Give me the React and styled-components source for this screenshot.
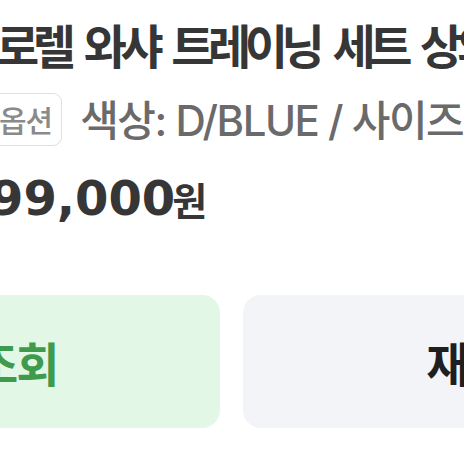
import React from "react";
import styled, { createGlobalStyle } from "styled-components";

const Global = createGlobalStyle`
  html, body { margin: 0; padding: 0; background: #ffffff; }
  body { font-family: "Noto Sans CJK KR", "Noto Sans", sans-serif; }
`;

const Page = styled.div`
  width: 464px;
  height: 464px;
  overflow: hidden;
  background: #ffffff;
  display: flex;
  flex-direction: column;
`;

const Title = styled.h1`
  margin: 16px 0 0 ${(p) => p.$shift}px;
  font-family: "Noto Sans CJK KR", sans-serif;
  font-size: 47px;
  font-weight: 700;
  letter-spacing: -6.5px;
  word-spacing: 10px;
  line-height: 56px;
  color: #363636;
  white-space: nowrap;
`;

const OptionRow = styled.div`
  display: flex;
  align-items: center;
  gap: 18px;
  height: 54px;
  margin: 20px 0 0 ${(p) => p.$shift}px;
  white-space: nowrap;
`;

const Badge = styled.span`
  display: inline-flex;
  align-items: center;
  height: 51px;
  padding: 0 9px 0 12px;
  border: 1.5px solid #e0e0e0;
  border-radius: 9px;
  font-size: 30px;
  font-weight: 500;
  letter-spacing: -1px;
  color: #8a8a8a;
`;

const OptionText = styled.span`
  font-family: "Inter", "Noto Sans CJK KR", sans-serif;
  font-size: 42px;
  font-weight: 500;
  letter-spacing: -1.5px;
  line-height: 54px;
  color: #6a6a6a;
  transform: translateY(2px);
`;

const Price = styled.div`
  margin: 22px 0 0 ${(p) => p.$shift}px;
  font-family: "DejaVu Sans", "Noto Sans CJK KR", sans-serif;
  font-size: 48px;
  font-weight: 700;
  line-height: 60px;
  color: #363636;
  white-space: nowrap;
`;

const Won = styled.span`
  margin-left: -3px;
  font-family: "Noto Sans CJK KR", sans-serif;
  font-size: 38px;
  font-weight: 700;
`;

const Actions = styled.div`
  display: flex;
  gap: 23px;
  margin: 66px 0 0 ${(p) => p.$shift}px;
`;

const ActionButton = styled.button`
  flex: 0 0 490px;
  height: 133px;
  border: none;
  border-radius: 18px;
  background: ${(p) => (p.$tone === "green" ? "#e2f7e5" : "#f2f4f7")};
  color: ${(p) => (p.$tone === "green" ? "#3e9b4d" : "#1f1f1f")};
  font-family: "Noto Sans CJK KR", sans-serif;
  font-size: 47px;
  font-weight: 700;
  letter-spacing: -2px;
  display: flex;
  align-items: center;
  justify-content: center;
  padding: 0;
`;

export default function App() {
  return (
    <>
      <Global />
      <Page>
        <Title $shift={-4}>로렐 와샤 트레이닝 세트 상의</Title>
        <OptionRow $shift={-14}>
          <Badge>옵션</Badge>
          <OptionText>색상: D/BLUE / 사이즈: L</OptionText>
        </OptionRow>
        <Price $shift={-10}>
          99,000<Won>원</Won>
        </Price>
        <Actions $shift={-270}>
          <ActionButton $tone="green">시세조회</ActionButton>
          <ActionButton $tone="gray">재등록</ActionButton>
        </Actions>
      </Page>
    </>
  );
}
